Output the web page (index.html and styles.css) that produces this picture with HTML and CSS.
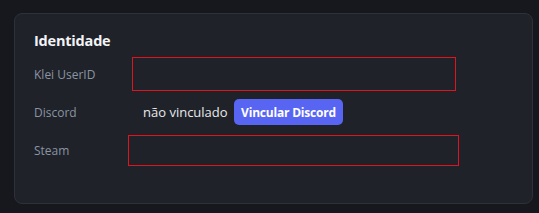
FILE: index.html
```html
<!DOCTYPE html>
<html>
<head>
<meta charset="utf-8">
<link rel="stylesheet" href="styles.css">
</head>
<body>
<section class="card">
  <h2 class="title">Identidade</h2>
  <div class="row row-klei">
    <span class="label">Klei UserID</span>
    <div class="field field-klei"></div>
  </div>
  <div class="row row-discord">
    <span class="label">Discord</span>
    <span class="status">não vinculado</span>
    <button class="btn">Vincular Discord</button>
  </div>
  <div class="row row-steam">
    <span class="label">Steam</span>
    <div class="field field-steam"></div>
  </div>
</section>
</body>
</html>
```

FILE: styles.css
```css
html, body {
  margin: 0;
  padding: 0;
  background: #16181d;
  height: 100%;
}
body {
  font-family: "Open Sans", "Noto Sans", "Liberation Sans", sans-serif;
  padding: 13px 0 0 14px;
  box-sizing: border-box;
}
.card {
  width: 519px;
  height: 191px;
  box-sizing: border-box;
  background: #1f2229;
  border: 1px solid #2d3139;
  border-radius: 8px;
  padding: 17px 19px 0 19px;
  display: flex;
  flex-direction: column;
}
.title {
  margin: 0;
  font-size: 14.5px;
  line-height: 19px;
  font-weight: 700;
  color: #f3f4f6;
  letter-spacing: -0.2px;
}
.row {
  display: flex;
  align-items: center;
}
.label {
  width: 94px;
  flex: none;
  font-size: 12px;
  color: #8a94a3;
}
.row-klei { margin-top: 7px; height: 34px; }
.row-discord { margin-top: 8px; height: 26px; }
.row-steam { margin-top: 10px; height: 31px; }
.field {
  box-sizing: border-box;
  border: 1px solid #e0141e;
  height: 100%;
}
.field-klei { width: 324px; margin-left: 4px; }
.field-steam { width: 331px; }
.status {
  margin-left: 15px;
  width: 91px;
  flex: none;
  font-size: 13px;
  color: #e8e9ec;
}
.btn {
  height: 26px;
  width: 109px;
  padding: 0;
  border: none;
  border-radius: 5px;
  background: #5865f2;
  color: #ffffff;
  font-family: inherit;
  font-size: 12px;
  font-weight: 700;
  letter-spacing: -0.2px;
}
```
